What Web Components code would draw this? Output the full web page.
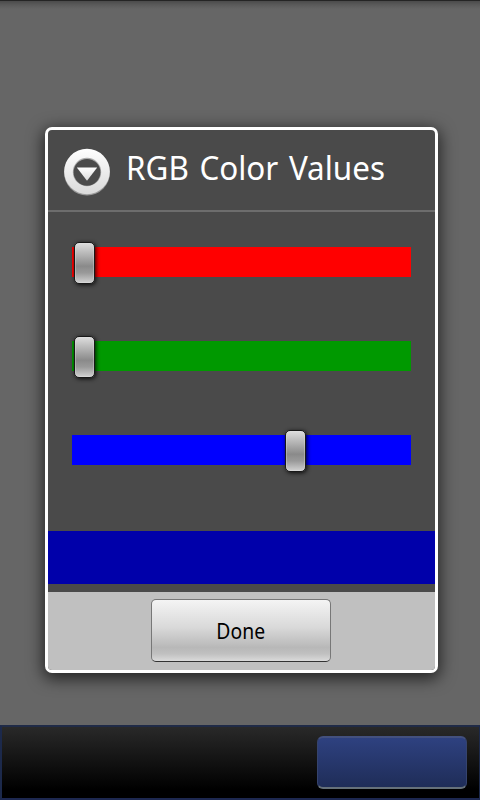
<!DOCTYPE html>
<html lang="en">
<head>
<meta charset="utf-8">
<title>RGB Color Values</title>
<style>
  html, body { margin: 0; height: 100%; overflow: hidden; background: #666; }
</style>
</head>
<body>
<app-screen>
  <color-dialog heading="RGB Color Values">
    <color-slider color="#ff0000" value="0"></color-slider>
    <color-slider color="#009900" value="0"></color-slider>
    <color-slider color="#0000ff" value="170"></color-slider>
    <color-preview slot="preview" color="#0000aa"></color-preview>
    <dialog-button slot="actions">Done</dialog-button>
  </color-dialog>
  <bottom-bar slot="bottom"></bottom-bar>
</app-screen>

<script>
// Custom Element: <app-screen>
class AppScreen extends HTMLElement {
  constructor() {
    super();
    this.attachShadow({ mode: 'open' });
    this.shadowRoot.innerHTML = `
      <style>
        :host {
          display: flex;
          flex-direction: column;
          width: 480px;
          height: 800px;
          box-sizing: border-box;
          border-top: 1px solid #252525;
          background: linear-gradient(#4b4b4b, #5b5b5b 4px, #666 8px);
          font-family: "Noto Sans", "Open Sans", sans-serif;
        }
        .content {
          flex: 1;
          display: flex;
          justify-content: center;
          align-items: flex-start;
          padding: 126px 0 0 3px;
        }
      </style>
      <div class="content"><slot></slot></div>
      <slot name="bottom"></slot>
    `;
  }
}

// Custom Element: <color-dialog>
class ColorDialog extends HTMLElement {
  constructor() {
    super();
    this.attachShadow({ mode: 'open' });
    this.shadowRoot.innerHTML = `
      <style>
        :host {
          display: block;
          box-sizing: border-box;
          width: 393px;
          height: 546px;
          border: 3px solid #fff;
          border-radius: 7px;
          background: #4a4a4a;
          box-shadow: 0 4px 16px 2px rgba(0, 0, 0, 0.65);
          overflow: hidden;
        }
        header {
          display: flex;
          align-items: center;
          box-sizing: border-box;
          height: 82px;
          padding: 3px 0 0 15px;
          border-bottom: 2px solid #6d6d6d;
        }
        svg { flex: none; width: 48px; height: 48px; }
        h1 {
          margin: 0 0 7px 15px;
          font-size: 33px;
          line-height: 44px;
          font-weight: 400;
          color: #fff;
          white-space: nowrap;
          word-spacing: 2.5px;
          transform: scaleX(0.952);
          transform-origin: left;
        }
        .sliders {
          display: flex;
          flex-direction: column;
          gap: 52px;
          height: 289px;
          padding: 30px 24px 0;
        }
        footer {
          display: flex;
          justify-content: center;
          box-sizing: border-box;
          height: 78px;
          margin-top: 8px;
          padding: 7px 1px 0 0;
          background: #c0c0c0;
        }
      </style>
      <header>
        <svg viewBox="0 0 48 48">
          <defs>
            <linearGradient id="ring" x1="0" y1="0" x2="0" y2="1">
              <stop offset="0" stop-color="#fff"/>
              <stop offset="1" stop-color="#dadada"/>
            </linearGradient>
          </defs>
          <circle cx="24" cy="24.5" r="23" fill="#999"/>
          <circle cx="24" cy="23.5" r="22.8" fill="url(#ring)"/>
          <circle cx="24" cy="24" r="14.2" fill="#aaa"/>
          <circle cx="24" cy="24.3" r="13.4" fill="#4b4b4b"/>
          <path d="M13.8 19.4h20.4L24 32.8z" fill="url(#ring)"/>
        </svg>
        <h1></h1>
      </header>
      <div class="sliders"><slot></slot></div>
      <slot name="preview"></slot>
      <footer><slot name="actions"></slot></footer>
    `;
  }

  connectedCallback() {
    this.shadowRoot.querySelector('h1').textContent = this.getAttribute('heading');
  }
}

// Custom Element: <color-slider>, value runs 0 - 255
class ColorSlider extends HTMLElement {
  constructor() {
    super();
    this.attachShadow({ mode: 'open' });
    this.shadowRoot.innerHTML = `
      <style>
        :host { display: flow-root; position: relative; height: 42px; }
        .track { height: 30px; margin-top: 5px; }
        .thumb {
          position: absolute;
          top: 0;
          box-sizing: border-box;
          width: 21px;
          height: 42px;
          border: 1px solid #181818;
          border-radius: 5px;
          background: linear-gradient(#dedede, #c4c4c4 18%, #8a8a8a 58%, #9a9a9a 75%, #d2d2d2);
          box-shadow: inset 0 0 0 1px rgba(225, 225, 225, 0.35), 1px 1px 4px rgba(0, 0, 0, 0.85);
        }
      </style>
      <div class="track"></div>
      <div class="thumb"></div>
    `;
  }

  connectedCallback() {
    const ratio = Number(this.getAttribute('value')) / 255;
    this.shadowRoot.querySelector('.track').style.background = this.getAttribute('color');
    this.shadowRoot.querySelector('.thumb').style.left = Math.round(2 + ratio * 316) + 'px';
  }
}

// Custom Element: <color-preview>
class ColorPreview extends HTMLElement {
  constructor() {
    super();
    this.attachShadow({ mode: 'open' });
    this.shadowRoot.innerHTML = `
      <style>
        :host { display: block; height: 53px; }
      </style>
    `;
  }

  connectedCallback() {
    this.style.background = this.getAttribute('color');
  }
}

// Custom Element: <dialog-button>
class DialogButton extends HTMLElement {
  constructor() {
    super();
    this.attachShadow({ mode: 'open' });
    this.shadowRoot.innerHTML = `
      <style>
        :host { display: block; width: 180px; height: 63px; }
        button {
          display: block;
          box-sizing: border-box;
          width: 100%;
          height: 100%;
          padding: 0 1px 2px 0;
          border: 1px solid #777;
          border-bottom-color: #333;
          border-radius: 5px;
          background: linear-gradient(#f4f4f4, #d9d9d9 45%, #b8b8b8 78%, #c0c0c0 88%, #dadada);
          font: 22px "Noto Sans", "Open Sans", sans-serif;
          color: #000;
        }
        span { display: inline-block; transform: scaleX(0.88); }
      </style>
      <button><span><slot></slot></span></button>
    `;
  }
}

// Custom Element: <bottom-bar>
class BottomBar extends HTMLElement {
  constructor() {
    super();
    this.attachShadow({ mode: 'open' });
    this.shadowRoot.innerHTML = `
      <style>
        :host {
          display: flex;
          justify-content: flex-end;
          box-sizing: border-box;
          height: 75px;
          padding: 9px 12px 0 0;
          border: 1px solid #1c294b;
          border-left-width: 2px;
          border-top: 2px solid #202b47;
          border-bottom: 2px solid #1d2850;
          background: linear-gradient(#292929, #000 88%);
        }
        .key {
          box-sizing: border-box;
          width: 150px;
          height: 53px;
          border: 1px solid #35436d;
          border-top: 2px solid #43507e;
          border-bottom: 2px solid #66717a;
          border-radius: 6px;
          background: linear-gradient(#2e4180, #1f2d58);
        }
      </style>
      <div class="key"></div>
    `;
  }
}

customElements.define('app-screen', AppScreen);
customElements.define('color-dialog', ColorDialog);
customElements.define('color-slider', ColorSlider);
customElements.define('color-preview', ColorPreview);
customElements.define('dialog-button', DialogButton);
customElements.define('bottom-bar', BottomBar);
</script>
</body>
</html>
